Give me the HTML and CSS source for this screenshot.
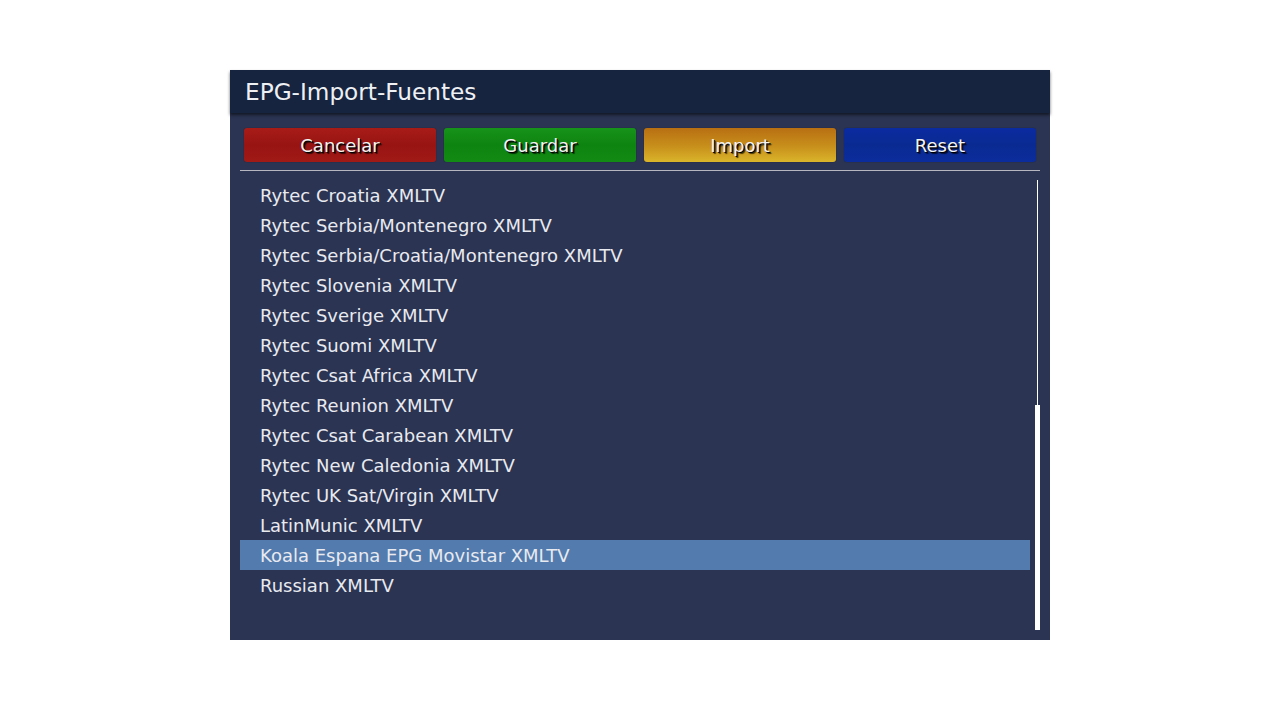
FILE: index.html
```html
<!DOCTYPE html>
<html lang="es">
<head>
<meta charset="utf-8">
<title>EPG-Import-Fuentes</title>
<link rel="stylesheet" href="styles.css">
</head>
<body>
<div class="screen">
  <div class="window">
    <div class="titlebar">EPG-Import-Fuentes</div>
    <div class="body">
      <div class="buttons">
        <div class="btn btn-red">Cancelar</div>
        <div class="btn btn-green">Guardar</div>
        <div class="btn btn-yellow">Import</div>
        <div class="btn btn-blue">Reset</div>
      </div>
      <div class="separator"></div>
      <div class="listarea">
        <ul class="list">
          <li>Rytec Croatia XMLTV</li>
          <li>Rytec Serbia/Montenegro XMLTV</li>
          <li>Rytec Serbia/Croatia/Montenegro XMLTV</li>
          <li>Rytec Slovenia XMLTV</li>
          <li>Rytec Sverige XMLTV</li>
          <li>Rytec Suomi XMLTV</li>
          <li>Rytec Csat Africa XMLTV</li>
          <li>Rytec Reunion XMLTV</li>
          <li>Rytec Csat Carabean XMLTV</li>
          <li>Rytec New Caledonia XMLTV</li>
          <li>Rytec UK Sat/Virgin XMLTV</li>
          <li>LatinMunic XMLTV</li>
          <li class="selected">Koala Espana EPG Movistar XMLTV</li>
          <li>Russian XMLTV</li>
        </ul>
        <div class="scrollbar">
          <div class="track"></div>
          <div class="thumb"></div>
        </div>
      </div>
    </div>
  </div>
</div>
</body>
</html>
```
FILE: styles.css
```css
html, body {
  margin: 0;
  padding: 0;
  background: #ffffff;
}

.screen {
  width: 1280px;
  height: 720px;
  padding-top: 70px;
  box-sizing: border-box;
  display: flex;
  justify-content: center;
  align-items: flex-start;
  font-family: "DejaVu Sans", sans-serif;
}

.window {
  width: 820px;
  height: 570px;
  background: #2b3452;
  display: flex;
  flex-direction: column;
}

.titlebar {
  height: 43px;
  background: #16243f;
  color: #eef0f4;
  font-size: 23.2px;
  line-height: 44px;
  padding-left: 15px;
  box-shadow: 0 2px 3px rgba(0, 0, 0, 0.55);
  position: relative;
  z-index: 1;
}

.body {
  flex: 1;
  display: flex;
  flex-direction: column;
  padding: 15px 10px 10px 10px;
}

.buttons {
  display: flex;
  gap: 8px;
  padding: 0 4px;
}

.btn {
  width: 192px;
  height: 34px;
  border-radius: 3px;
  color: #f4f4f4;
  font-size: 18px;
  line-height: 36px;
  text-align: center;
  text-shadow: 1px 1px 0 #000, 2px 2px 1px rgba(0, 0, 0, 0.7);
  box-shadow: 0 0 1px rgba(0, 0, 0, 0.6);
}

.btn-red {
  background: linear-gradient(#a81c17, #971413 50%, #a11a16);
}

.btn-green {
  background: linear-gradient(#17921a, #0e8410 50%, #128a13);
}

.btn-yellow {
  background: linear-gradient(#b86f12, #c8901c 55%, #dab52a);
}

.btn-blue {
  background: linear-gradient(#0a2aa0, #0a2a92 50%, #0b2c9c);
}

.separator {
  height: 1px;
  background: #b5b6c0;
  margin-top: 8px;
}

.listarea {
  flex: 1;
  display: flex;
  padding-top: 9px;
}

.list {
  list-style: none;
  margin: 0;
  padding: 0;
  width: 790px;
}

.list li {
  height: 30px;
  line-height: 31px;
  padding-left: 20px;
  font-size: 18px;
  color: #e8eaf0;
}

.list li.selected {
  background: #537bad;
}

.scrollbar {
  width: 5px;
  margin-left: 5px;
  height: 450px;
  display: flex;
  flex-direction: column;
  align-items: center;
}

.track {
  width: 1px;
  height: 225px;
  background: #ffffff;
}

.thumb {
  width: 5px;
  flex: 1;
  background: #ffffff;
}
```
